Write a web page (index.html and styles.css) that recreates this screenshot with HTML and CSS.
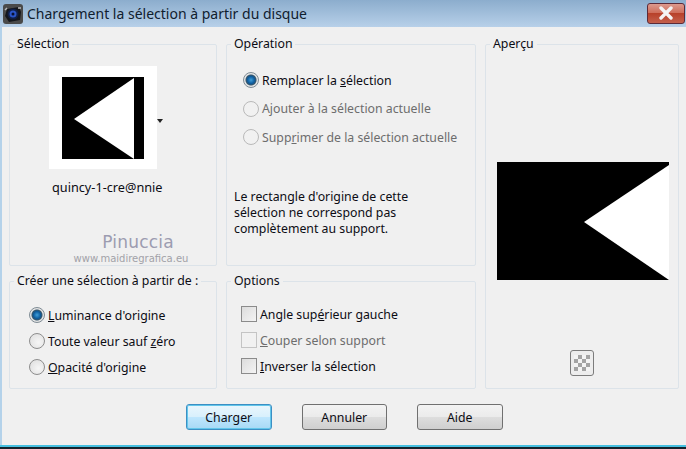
FILE: index.html
```html
<!DOCTYPE html>
<html lang="fr">
<head>
    <meta charset="UTF-8">
    <title>Chargement la sélection à partir du disque</title>
    <link rel="stylesheet" href="styles.css">
</head>
<body>
    <div class="window">
        <div class="titlebar">
            <svg class="appicon" width="20" height="20" viewBox="0 0 20 20">
                <rect x="0" y="0" width="20" height="20" rx="3" fill="#4a4a4a"/>
                <path d="M4 5 L16 3 L18 8 L17 16 L6 18 L2 12 Z" fill="#15171c"/>
                <circle cx="10" cy="10" r="5.5" fill="#10204a"/>
                <circle cx="10" cy="10" r="3.5" fill="#2a55c8"/>
                <circle cx="10" cy="10" r="1.5" fill="#0a1030"/>
                <path d="M15 4 L18 4 M2 6 L4 4" stroke="#b8b8b8" stroke-width="1.4"/>
            </svg>
            <span class="title">Chargement la sélection à partir du disque</span>
            <div class="close">
                <svg width="16" height="14" viewBox="0 0 16 14">
                    <path d="M3 2 L13 12 M13 2 L3 12" stroke="#f4f4f4" stroke-width="3.4" stroke-linecap="round"/>
                </svg>
            </div>
        </div>

        <div class="content">
            <fieldset class="panel selection">
                <legend>Sélection</legend>
                <div class="thumbrow">
                    <div class="thumb">
                        <svg width="82" height="82" viewBox="0 0 82 82">
                            <rect width="82" height="82" fill="#000"/>
                            <polygon points="12,42 72,1 72,82" fill="#fff"/>
                        </svg>
                    </div>
                    <span class="caret"></span>
                </div>
                <div class="thumbname">quincy-1-cre@nnie</div>
                <div class="watermark">
                    <div class="wm-name">Pinuccia</div>
                    <div class="wm-url">www.maidiregrafica.eu</div>
                </div>
            </fieldset>

            <fieldset class="panel operation">
                <legend>Opération</legend>
                <div class="radios">
                    <label class="opt"><span class="radio on"></span><span>Remplacer la <u>s</u>élection</span></label>
                    <label class="opt off"><span class="radio"></span><span>A<u>j</u>outer à la sélection actuelle</span></label>
                    <label class="opt off"><span class="radio"></span><span>Supp<u>r</u>imer de la sélection actuelle</span></label>
                </div>
                <p class="note">Le rectangle d'origine de cette<br>sélection ne correspond pas<br>complètement au support.</p>
            </fieldset>

            <fieldset class="panel preview">
                <legend>Aperçu</legend>
                <svg class="previewimg" width="172" height="118" viewBox="0 0 172 118">
                    <rect width="172" height="118" fill="#000"/>
                    <polygon points="87,60 172,3 172,118" fill="#fff"/>
                </svg>
                <div class="checkerbtn">
                    <svg width="16" height="16" viewBox="0 0 16 16">
                        <rect width="16" height="16" fill="#f4f4f4"/>
                        <path d="M4 0h4v4H4z M12 0h4v4h-4z M0 4h4v4H0z M8 4h4v4H8z M4 8h4v4H4z M12 8h4v4h-4z M0 12h4v4H0z M8 12h4v4H8z" fill="#a4a4a4"/>
                    </svg>
                </div>
            </fieldset>

            <fieldset class="panel create">
                <legend>Créer une sélection à partir de :</legend>
                <label class="opt"><span class="radio on"></span><span><u>L</u>uminance d'origine</span></label>
                <label class="opt"><span class="radio"></span><span>Toute valeur sauf <u>z</u>éro</span></label>
                <label class="opt"><span class="radio"></span><span><u>O</u>pacité d'origine</span></label>
            </fieldset>

            <fieldset class="panel options">
                <legend>Options</legend>
                <label class="opt"><span class="check"></span><span>Angle sup<u>é</u>rieur gauche</span></label>
                <label class="opt off"><span class="check"></span><span><u>C</u>ouper selon support</span></label>
                <label class="opt"><span class="check"></span><span><u>I</u>nverser la sélection</span></label>
            </fieldset>
        </div>

        <div class="buttons">
            <button class="btn default">Charger</button>
            <button class="btn">Annuler</button>
            <button class="btn">Aide</button>
        </div>
        <div class="bottomedge"></div>
    </div>
</body>
</html>
```

FILE: styles.css
```css
*{
    margin: 0;
    padding: 0;
    box-sizing: border-box;
}
html, body{
    width: 686px;
    height: 449px;
    overflow: hidden;
}
body{
    font-family: "Noto Sans", "Open Sans", sans-serif;
    font-size: 12.3px;
    color: #0c0c14;
}
.window{
    height: 449px;
    display: flex;
    flex-direction: column;
    background: #f0f0f0;
    border-left: 2px solid #b4d2ea;
}
.titlebar{
    height: 27px;
    flex: none;
    margin-left: -2px;
    padding: 0 1px 0 3px;
    display: flex;
    align-items: center;
    background: linear-gradient(#8cadcd, #b7d0e9);
}
.appicon{
    flex: none;
    margin-right: 4px;
}
.title{
    flex: 1;
    font-size: 14px;
    line-height: 27px;
    color: #10202e;
}
.close{
    width: 38px;
    height: 21px;
    margin-top: -1px;
    display: flex;
    align-items: center;
    justify-content: center;
    border: 1px solid #5c2a38;
    border-radius: 3px;
    background: linear-gradient(#dc9a8e 0%, #cf6f5c 45%, #b8412a 50%, #c4604c 100%);
}

.content{
    flex: none;
    display: grid;
    grid-template-columns: 208px 250px 194px;
    grid-template-rows: 230px 116px;
    column-gap: 9px;
    row-gap: 7px;
    padding: 9px 0 0 7px;
}
.panel{
    position: relative;
    border: 1px solid #dce3e9;
    border-radius: 2px;
    min-width: 0;
}
.panel legend{
    margin-left: 4px;
    padding: 0 3px;
    line-height: 16px;
    white-space: nowrap;
}
.preview{
    grid-column: 3;
    grid-row: 1 / 3;
    display: flex;
    flex-direction: column;
    align-items: center;
}

/* selection */
.thumbrow{
    display: flex;
    padding: 14px 0 0 39px;
}
.thumb{
    width: 108px;
    height: 103px;
    padding: 11px 13px;
    background: #fff;
}
.thumb svg{
    display: block;
}
.caret{
    align-self: center;
    width: 0;
    height: 0;
    margin-top: 6px;
    border-style: solid;
    border-width: 4px 3.5px 0;
    border-color: #222 transparent transparent;
}
.thumbname{
    margin-top: 9px;
    margin-left: 42px;
    font-size: 12.7px;
    line-height: 18px;
}
.watermark{
    position: absolute;
    left: 60px;
    top: 180px;
    width: 122px;
    text-align: center;
    font-family: "DejaVu Sans", sans-serif;
    color: #9c9cb0;
}
.wm-name{
    padding-left: 14px;
    font-size: 17px;
    line-height: 21px;
    letter-spacing: 0.2px;
}
.wm-url{
    font-size: 10px;
    line-height: 12px;
    color: #a2a2a8;
}

/* options */
.opt{
    display: flex;
    align-items: center;
    height: 26px;
    white-space: nowrap;
}
.opt.off{
    color: #6d6d6d;
}
.radio{
    flex: none;
    width: 16px;
    height: 16px;
    margin-right: 3px;
    border: 1px solid #8d8d8d;
    border-radius: 50%;
    background: radial-gradient(circle at 60% 60%, #f6f6f6, #dcdcdc);
}
.radio.on{
    border-color: #7f8c95;
    background: radial-gradient(circle at 50% 50%, #3f9ed8 0, #0d5c9e 3.5px, #35566c 5px, #e4e4e4 6px);
}
.opt.off .radio{
    border-color: #b9b9b9;
    background: #f1f1f1;
}
.check{
    flex: none;
    width: 16px;
    height: 16px;
    margin-right: 3px;
    border: 1px solid #8b8b8b;
    background: linear-gradient(135deg, #dcdcdc, #f4f4f4);
}
.opt.off .check{
    border-color: #c4c4c4;
    background: #f1f1f1;
}
.radios{
    padding: 14px 0 0 16px;
}
.radios .opt{
    height: 28.5px;
}
.note{
    margin: 37px 0 0 7px;
    line-height: 16px;
}
.create{
    padding-top: 13px;
}
.create .opt{
    margin-left: 19px;
}
.options{
    padding-top: 12px;
}
.options .opt{
    margin-left: 14px;
}

/* preview */
.previewimg{
    display: block;
    margin: 110px 0 0 2px;
}
.checkerbtn{
    width: 24px;
    height: 26px;
    margin-top: 70px;
    display: flex;
    align-items: center;
    justify-content: center;
    border: 1px solid #7c7c7c;
    border-radius: 3px;
    background: #ededed;
}

/* bottom buttons */
.buttons{
    flex: 1;
    display: flex;
    gap: 30px;
    padding: 15px 0 0 184px;
}
.btn{
    width: 85.5px;
    height: 26px;
    font-family: inherit;
    font-size: 12.3px;
    color: #0c0c14;
    border: 1px solid #707070;
    border-radius: 3px;
    background: linear-gradient(#f3f3f3 0%, #ebebeb 48%, #dddddd 52%, #cfcfcf 100%);
}
.btn.default{
    border-color: #3c8fc4;
    box-shadow: inset 0 0 0 1px #62c6ea;
    background: linear-gradient(#eaf6fd 0%, #d9f0fc 48%, #bee6fd 52%, #a7d9f5 100%);
}
.bottomedge{
    flex: none;
    height: 4px;
    margin-left: -2px;
    background: linear-gradient(#46c0e0 0 2px, #14232c 2px);
}
```
